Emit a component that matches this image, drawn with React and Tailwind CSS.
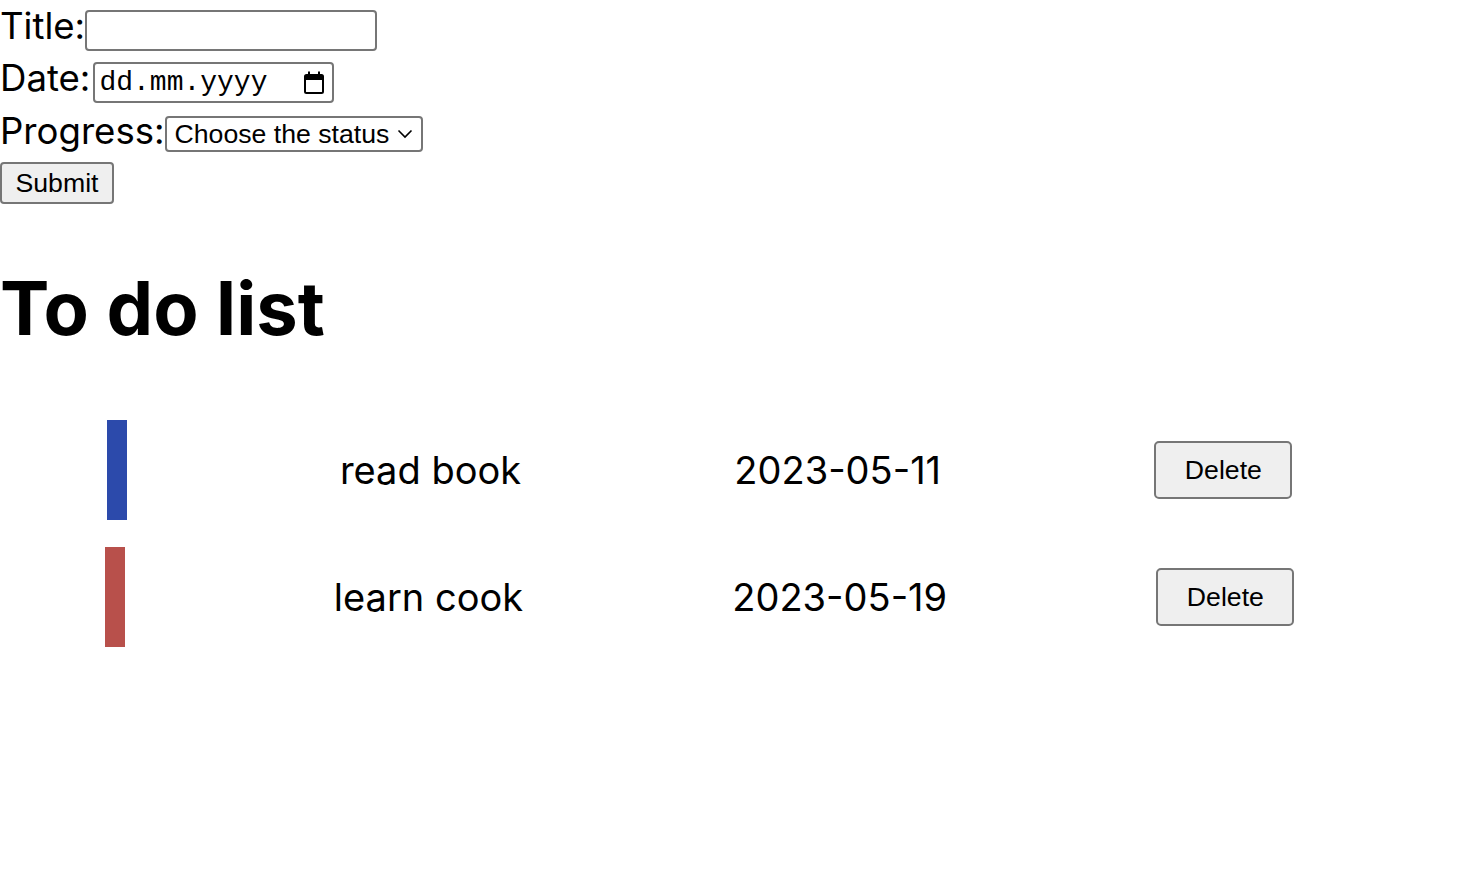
import React from "react";

function CalendarIcon() {
  return (
    <svg width="20" height="23" viewBox="0 0 20 23" fill="none">
      <rect x="1" y="4" width="18" height="18" rx="1.5" stroke="#000" strokeWidth="2" />
      <rect x="1" y="4" width="18" height="5" fill="#000" />
      <rect x="4" y="0.5" width="2" height="5" fill="#000" />
      <rect x="14" y="0.5" width="2" height="5" fill="#000" />
    </svg>
  );
}

function Chevron() {
  return (
    <svg width="16" height="10" viewBox="0 0 16 10" fill="none">
      <path d="M1.5 1.5 L8 8 L14.5 1.5" stroke="#000" strokeWidth="1.6" />
    </svg>
  );
}

const items = [
  { title: "read book", date: "2023-05-11", color: "bg-[#2c4aab]" },
  { title: "learn cook", date: "2023-05-19", color: "bg-[#b8504b]" },
];

export default function App() {
  return (
    <div className="min-h-[887px] bg-white text-black font-['Inter',sans-serif]">
      <form onSubmit={(e) => e.preventDefault()}>
        <div className="flex h-[52px]">
          <label className="text-[36.6px] leading-none mt-[8px]">Title:</label>
          <input
            type="text"
            className="mt-[10px] h-[41px] w-[292px] border-2 border-[#767676] rounded-[4px] bg-white px-1 font-['Liberation_Sans',sans-serif] text-[26.67px] outline-none"
          />
        </div>
        <div className="flex h-[52px]">
          <label className="text-[36.6px] leading-none mt-[8px] mr-[3px]">Date:</label>
          <div className="mt-[10px] h-[41px] w-[241px] border-2 border-[#767676] rounded-[4px] bg-white flex items-center pl-[4px] pr-[8px] justify-between">
            <span className="font-['Liberation_Mono',monospace] text-[28px] leading-none">dd.mm.yyyy</span>
            <CalendarIcon />
          </div>
        </div>
        <div className="flex h-[58px]">
          <label className="text-[36.6px] leading-none mt-[9px]">Progress:</label>
          <div className="mt-[12px] h-[36px] w-[258px] border-2 border-[#767676] rounded-[4px] bg-white flex items-center pl-[8px] pr-[8px] justify-between font-['Liberation_Sans',sans-serif] text-[26.67px] leading-none">
            <span>Choose the status</span>
            <Chevron />
          </div>
        </div>
        <button
          type="submit"
          className="block h-[42px] w-[114px] border-2 border-[#767676] rounded-[4px] bg-[#efefef] font-['Liberation_Sans',sans-serif] text-[26.67px] leading-none"
        >
          Submit
        </button>
      </form>

      <h1 className="mt-[59px] text-[74px] font-bold leading-[90px]">To do list</h1>

      <div className="mt-[67px] flex flex-col gap-[27px] w-[1399px]">
        {items.map((it) => (
          <div key={it.title} className="flex justify-around items-center h-[100px]">
            <div className={`w-[20px] h-[100px] ${it.color}`} />
            <span className="text-[38px]">{it.title}</span>
            <span className="text-[38px]">{it.date}</span>
            <button className="h-[58px] w-[138px] border-2 border-[#767676] rounded-[5px] bg-[#efefef] font-['Liberation_Sans',sans-serif] text-[26.67px] leading-none">
              Delete
            </button>
          </div>
        ))}
      </div>
    </div>
  );
}
